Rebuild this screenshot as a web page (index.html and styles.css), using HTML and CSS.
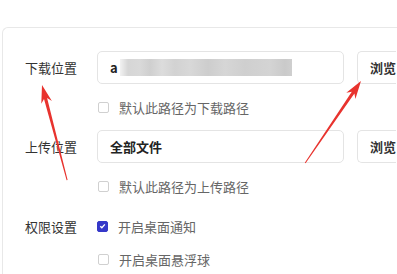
FILE: index.html
```html
<!DOCTYPE html>
<html lang="zh">
<head>
<meta charset="utf-8">
<link rel="stylesheet" href="styles.css">
</head>
<body>
<div class="card">
  <div class="row">
    <div class="label">下载位置</div>
    <div class="input"><span class="val">a</span><span class="blur"></span></div>
    <div class="btn">浏览</div>
  </div>
  <div class="check-row"><span class="box"></span><span class="ctext">默认此路径为下载路径</span></div>
  <div class="row">
    <div class="label">上传位置</div>
    <div class="input"><span class="val bold">全部文件</span></div>
    <div class="btn">浏览</div>
  </div>
  <div class="check-row"><span class="box"></span><span class="ctext">默认此路径为上传路径</span></div>
  <div class="perm">
    <div class="label">权限设置</div>
    <div class="check-row inline"><span class="box checked"><svg viewBox="0 0 10 10" width="10" height="10"><path d="M2.5 5.2 L4.3 7 L7.6 3.2" fill="none" stroke="#fff" stroke-width="1.5"/></svg></span><span class="ctext">开启桌面通知</span></div>
  </div>
  <div class="check-row last"><span class="box"></span><span class="ctext">开启桌面悬浮球</span></div>
</div>
<svg class="arrows" width="397" height="274" viewBox="0 0 397 274">
  <polygon fill="#e8332e" points="42,85 51.9,101 47.1,98.1 67.6,180 66.6,180.2 44,98.9 41.3,103.8"/>
  <polygon fill="#e8332e" points="361,81 355.4,99 354.4,93.5 305.6,163.3 304.8,162.7 351.8,91.7 346.3,92.8"/>
</svg>
</body>
</html>
```
FILE: styles.css
```css
html, body {
  margin: 0;
  padding: 0;
  background: #fff;
  overflow: hidden;
  width: 397px;
  height: 274px;
}
body {
  position: relative;
  font-family: "Noto Sans CJK SC", "Noto Sans", sans-serif;
}
.card {
  margin: 27px 0 0 2px;
  width: 395px;
  height: 247px;
  border: 1px solid #e8e8e8;
  border-right: none;
  border-bottom: none;
  border-radius: 6px 0 0 0;
  padding: 23px 0 0 22px;
  box-sizing: border-box;
}
.row {
  display: flex;
  align-items: center;
  height: 33px;
}
.label {
  width: 72px;
  font-size: 13px;
  color: #333;
  flex: none;
}
.input {
  width: 247px;
  height: 33px;
  box-sizing: border-box;
  border: 1px solid #e4e4e4;
  border-radius: 5px;
  display: flex;
  align-items: center;
  padding-left: 12px;
  flex: none;
}
.val {
  font-size: 13px;
  color: #222;
  font-weight: 700;
}
.blur {
  width: 172px;
  height: 17px;
  margin-left: 2px;
  background: linear-gradient(90deg, #f2f2f2 0px, #d6d6d6 8px, #d9d9d9 20px, #cfcfcf 30px, #dcdcdc 42px, #d2d2d2 55px, #d8d8d8 70px, #cdcdcd 88px, #d6d6d6 105px, #cfcfcf 125px, #d4d4d4 150px, #cacaca 165px, #cfcfcf 172px);
}
.btn {
  margin-left: 13px;
  width: 39px;
  height: 33px;
  box-sizing: border-box;
  border: 1px solid #e4e4e4;
  border-right: none;
  border-radius: 5px 0 0 5px;
  font-size: 13px;
  font-weight: 700;
  color: #333;
  display: flex;
  align-items: center;
  padding-left: 12px;
  flex: none;
  white-space: nowrap;
  overflow: hidden;
}
.check-row {
  display: flex;
  align-items: center;
  height: 46px;
  margin-left: 73px;
}
.check-row.inline {
  margin-left: 0;
  height: auto;
}
.perm {
  display: flex;
  align-items: center;
  height: 34px;
}
.check-row.last {
  height: 32px;
}
.box {
  width: 9px;
  height: 9px;
  border: 1px solid #d0d0d0;
  border-radius: 2px;
  box-sizing: content-box;
  flex: none;
  display: flex;
  align-items: center;
  justify-content: center;
}
.box.checked {
  background: #3538c9;
  border-color: #3538c9;
}
.box svg {
  display: block;
}
.ctext {
  margin-left: 10px;
  font-size: 13px;
  color: #666;
}
.arrows {
  position: absolute;
  left: 0;
  top: 0;
  pointer-events: none;
}
```
